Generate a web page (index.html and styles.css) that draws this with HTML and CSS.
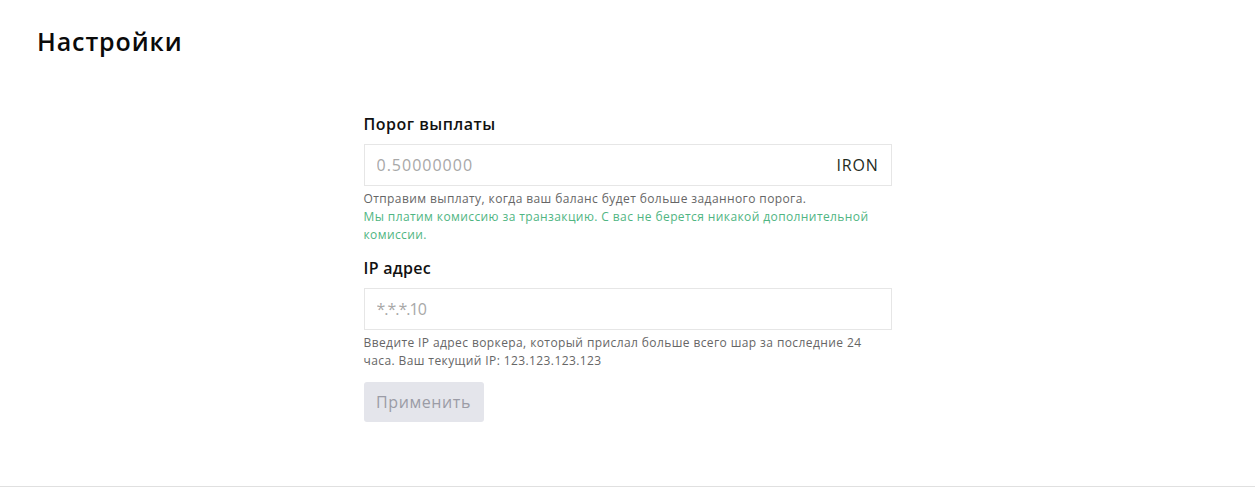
FILE: index.html
```html
<!DOCTYPE html>
<html lang="ru">
<head>
    <meta charset="UTF-8">
    <meta name="viewport" content="width=device-width, initial-scale=1.0">
    <title>Настройки</title>
    <link rel="stylesheet" href="styles.css">
</head>
<body>
    <div class="page">
        <h1 class="page-title">Настройки</h1>

        <form class="settings">
            <div class="field">
                <label class="field-label">Порог выплаты</label>
                <div class="input-box">
                    <input type="text" placeholder="0.50000000">
                    <span class="suffix">IRON</span>
                </div>
                <p class="hint">Отправим выплату, когда ваш баланс будет больше заданного порога.</p>
                <p class="hint hint-green">Мы платим комиссию за транзакцию. С вас не берется никакой дополнительной комиссии.</p>
            </div>

            <div class="field">
                <label class="field-label big">IP адрес</label>
                <div class="input-box">
                    <input type="text" class="ip-input" placeholder="*.*.*.10">
                </div>
                <p class="hint">Введите IP адрес воркера, который прислал больше всего шар за последние 24 часа. Ваш текущий IP: 123.123.123.123</p>
            </div>

            <button type="button" class="apply" disabled>Применить</button>
        </form>
    </div>
    <footer class="footer"></footer>
</body>
</html>
```

FILE: styles.css
```css
* {
    margin: 0;
    padding: 0;
    box-sizing: border-box;
    font-family: "Open Sans", Arial, sans-serif;
}

body {
    background: #fff;
    color: #111;
}

.page {
    padding: 26px 37px 64px;
    height: 486px;
}

.page-title {
    font-size: 25px;
    line-height: 30px;
    font-weight: 600;
    letter-spacing: 0.9px;
    color: #0a0a0a;
}

.settings {
    width: 528px;
    margin: 58px auto 0;
}

.field-label {
    display: block;
    font-size: 16px;
    line-height: 20px;
    font-weight: 600;
    letter-spacing: 0.5px;
    margin-bottom: 10px;
}

.field-label.big {
    line-height: 22px;
    letter-spacing: 0.3px;
    margin-bottom: 9px;
}

.input-box {
    display: flex;
    align-items: center;
    height: 42px;
    border: 1px solid #e6e6e6;
    padding: 0 12px;
}

.input-box input {
    flex: 1;
    border: none;
    outline: none;
    font-size: 16px;
    letter-spacing: 1px;
    color: #333;
    background: transparent;
}

.input-box .ip-input {
    letter-spacing: -1px;
}

.input-box input::placeholder {
    color: #a8a8a8;
}

.suffix {
    font-size: 16px;
    letter-spacing: 0.8px;
    color: #1e2b22;
}

.hint {
    font-size: 12px;
    line-height: 18px;
    letter-spacing: 0.4px;
    color: #666;
}

.field .hint:first-of-type {
    margin-top: 4px;
}

.hint-green {
    color: #4fb582;
}

.field + .field {
    margin-top: 13px;
}

.apply {
    margin-top: 12px;
    width: 120px;
    height: 40px;
    border: none;
    border-radius: 3px;
    background: #e4e5eb;
    color: #9b9ca6;
    font-size: 16px;
    letter-spacing: 0.6px;
}

.footer {
    border-top: 1px solid #e0e0e0;
    height: 3px;
}
```
